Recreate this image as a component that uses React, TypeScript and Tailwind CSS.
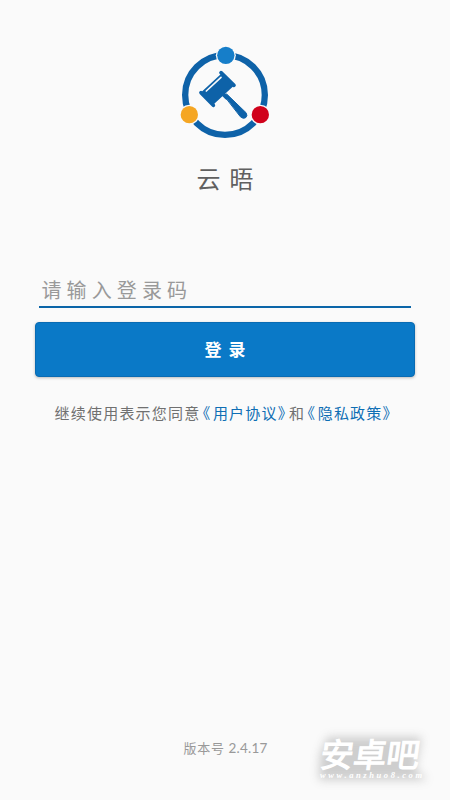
import React from "react";

function Logo() {
  return (
    <svg className="h-[110px] w-[110px] shrink-0" viewBox="0 0 330 330" aria-hidden="true">
      <circle cx="165" cy="180" r="119.5" fill="none" stroke="#0e62a8" strokeWidth="19" />
      <circle cx="167.5" cy="61" r="30" fill="#fafafa" />
      <circle cx="58" cy="239" r="30" fill="#fafafa" />
      <circle cx="271" cy="239" r="30" fill="#fafafa" />
      <circle cx="167.5" cy="61" r="26" fill="#167ec9" />
      <circle cx="58" cy="239" r="26" fill="#f5a623" />
      <circle cx="271" cy="239" r="26" fill="#d0021b" />
      <g stroke="#0e62a8" strokeLinecap="round" strokeLinejoin="round">
        <path d="M154 120 L187 152 L130 205 L98 172 Z" fill="#0e62a8" strokeWidth="6" />
        <path d="M153 113 L192 151 M93 173 L130 211" strokeWidth="11" />
        <path d="M158 176 L170 188" strokeWidth="12" />
        <path d="M164 183 L170 177 L228 233 Q234 242 227 248 Q220 253 212 246 Z" fill="#0e62a8" strokeWidth="3" />
      </g>
      <path d="M153 127 L109 168" stroke="#fafafa" strokeWidth="5" strokeLinecap="round" />
    </svg>
  );
}

function Watermark() {
  return (
    <svg className="absolute left-[305px] top-[725px] h-[70px] w-[140px]" viewBox="0 0 140 70">
      <defs>
        <filter id="halo" x="-20%" y="-40%" width="140%" height="180%">
          <feGaussianBlur stdDeviation="5" />
        </filter>
      </defs>
      <g filter="url(#halo)" opacity="0.33">
        <path d="M24 14 L114 14 L108 45 L117 53 L16 53 L17 30 Z" fill="#777" stroke="#777" strokeWidth="4" />
      </g>
      <text x="20" y="42" transform="skewX(-8)" textLength="99" fill="#fff" stroke="#fff" strokeWidth="1.2" className="font-['Noto_Sans_CJK_SC',sans-serif] text-[33px]">安卓吧</text>
      <text x="15" y="53" textLength="102" fill="#fff" className="font-['Liberation_Serif',serif] text-[8.5px] font-bold italic">www.anzhuo8.com</text>
    </svg>
  );
}

function Agreement({ children }: { children: string }) {
  return (
    <span className="text-[#0e6eb4]">
      <span className="ml-[2.3px] mr-[1.5px] [font-feature-settings:'halt']">《</span>
      {children}
      <span className="mr-[2.6px] [font-feature-settings:'halt']">》</span>
    </span>
  );
}

export default function App() {
  return (
    <main className="relative flex h-[800px] w-[450px] flex-col items-center overflow-hidden bg-[#fafafa] pt-[35px] font-['Noto_Sans_CJK_SC',sans-serif]">
      <Logo />
      <h1 className="mt-[15px] h-[36px] pl-[9px] text-[24px] leading-[36px] tracking-[9px] text-[#606060]">云晤</h1>
      <div className="mt-[79px] h-[33px] w-[372px] border-b-2 border-[#0b65a8] pl-[2.5px]">
        <span className="block text-[20px] leading-[30px] tracking-[5.1px] text-[#999]">请输入登录码</span>
      </div>
      <button className="mt-[14px] h-[55px] w-[380px] rounded-[4px] border border-[#096bb3] bg-[#0a79c7] pb-[2px] pl-[7px] text-[17px] font-bold leading-[51px] tracking-[7px] text-white shadow-[0_1px_3px_rgba(0,0,0,0.25)]">
        登录
      </button>
      <p className="mt-[24px] w-[342px] whitespace-nowrap pl-[0.6px] text-[15px] leading-[24px] tracking-[1.2px] text-[#707070]">
        继续使用表示您同意<Agreement>用户协议</Agreement>和<Agreement>隐私政策</Agreement>
      </p>
      <footer className="mt-[311px] flex h-[24px] items-center pl-[1px] text-[13px] leading-[24px] tracking-[0.7px] text-[#999]">
        <span>版本号</span>
        <span className="ml-[4px] font-['Lato',sans-serif] text-[13.5px] tracking-[0.2px]">2.4.17</span>
      </footer>
      <Watermark />
    </main>
  );
}
